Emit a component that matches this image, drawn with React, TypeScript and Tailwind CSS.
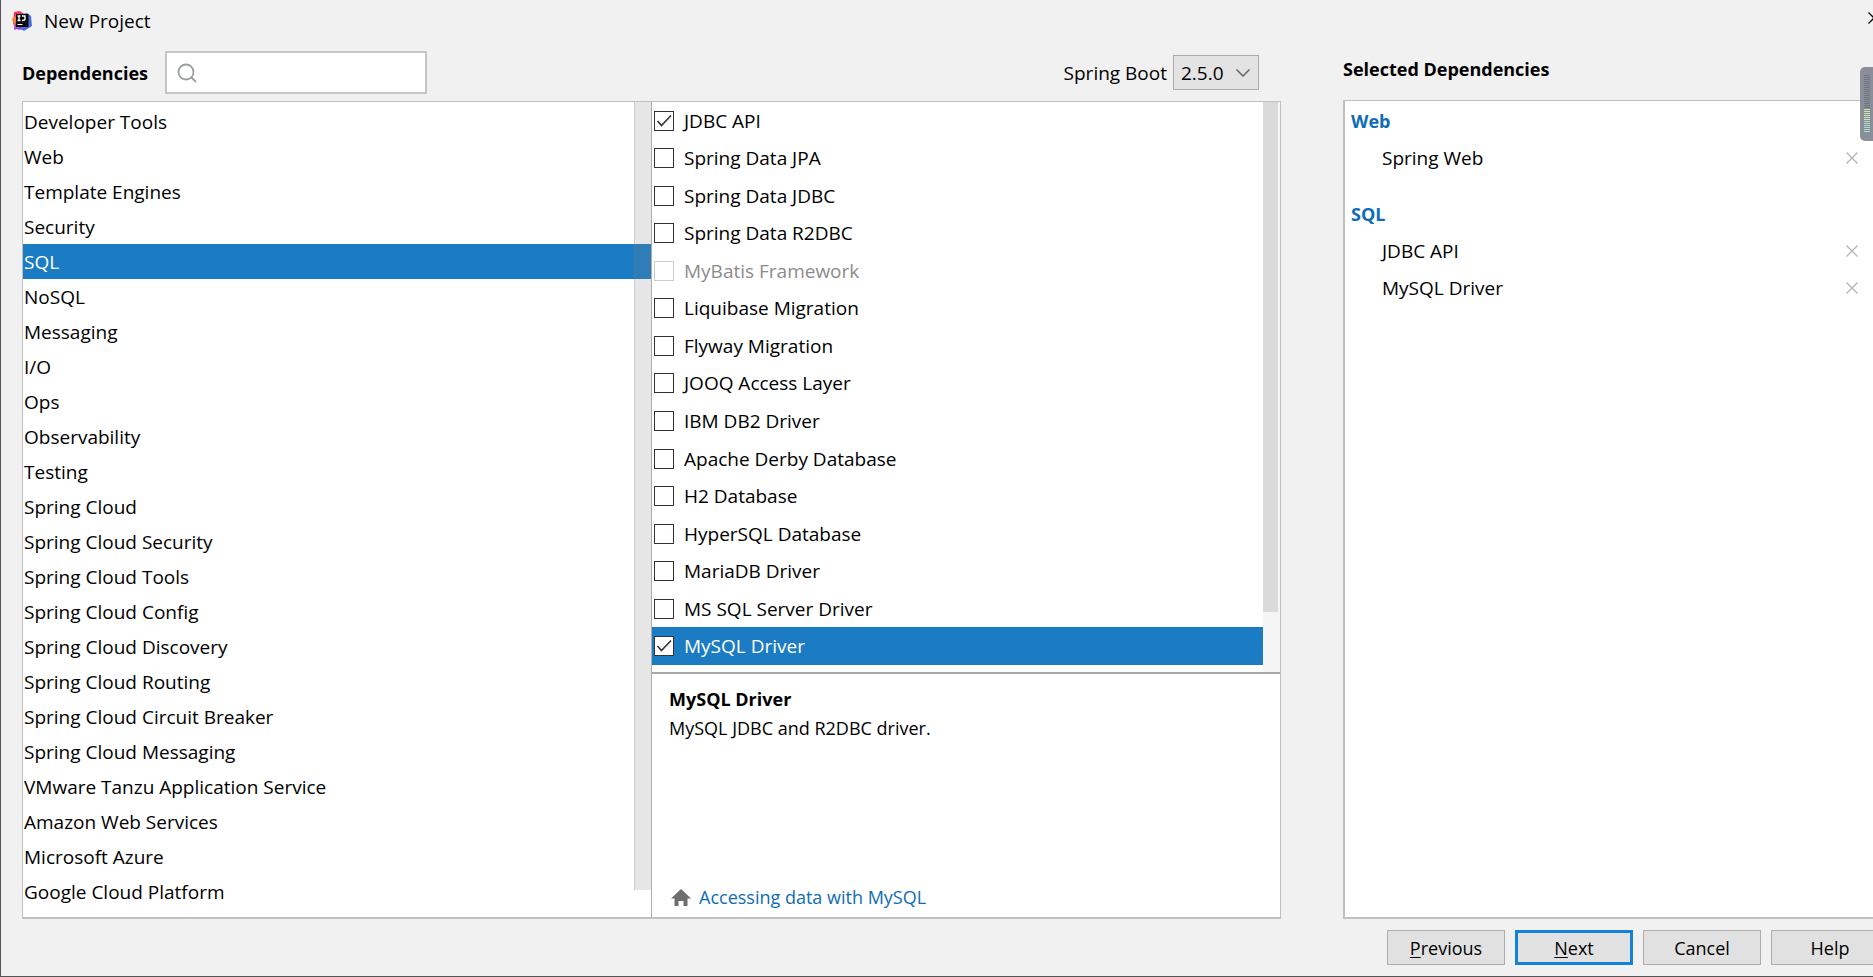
import React, { useState } from 'react';

const categories = [
  'Developer Tools',
  'Web',
  'Template Engines',
  'Security',
  'SQL',
  'NoSQL',
  'Messaging',
  'I/O',
  'Ops',
  'Observability',
  'Testing',
  'Spring Cloud',
  'Spring Cloud Security',
  'Spring Cloud Tools',
  'Spring Cloud Config',
  'Spring Cloud Discovery',
  'Spring Cloud Routing',
  'Spring Cloud Circuit Breaker',
  'Spring Cloud Messaging',
  'VMware Tanzu Application Service',
  'Amazon Web Services',
  'Microsoft Azure',
  'Google Cloud Platform',
];

const dependencies = [
  'JDBC API',
  'Spring Data JPA',
  'Spring Data JDBC',
  'Spring Data R2DBC',
  'MyBatis Framework',
  'Liquibase Migration',
  'Flyway Migration',
  'JOOQ Access Layer',
  'IBM DB2 Driver',
  'Apache Derby Database',
  'H2 Database',
  'HyperSQL Database',
  'MariaDB Driver',
  'MS SQL Server Driver',
  'MySQL Driver',
];

const unavailable = ['MyBatis Framework'];

const IdeaLogo = () => (
  <svg viewBox="0 0 20 20" className="h-5 w-5" aria-hidden="true">
    <path d="M2 1l6-1 4 3-2 13-7 1-2-5z" fill="#f0365c" />
    <path d="M0 8l3-3 4 5-5 5z" fill="#f97a3a" />
    <path d="M10 3l5-1 4 3 1 10-8 5-5-3z" fill="#4a6fe3" />
    <path d="M2 19l1-7 8 6-4 1-2-1z" fill="#9a45e0" />
    <path d="M4 3h12.500v13H4z" fill="#0a0a0a" />
    <path d="M5.500 5h3M7 5v4.500M5.500 9.500h3M10 5h3v3q0 1.500-3 1.500" stroke="#fff" strokeWidth="1.400" fill="none" />
    <path d="M5.500 13.500h5" stroke="#fff" strokeWidth="1" />
  </svg>
);

const Cross = ({ className }: { className: string }) => (
  <svg viewBox="0 0 12 12" className={className} fill="none" stroke="currentColor" strokeWidth="1.300" aria-hidden="true">
    <path d="M.5.5l11 11M11.500.500l-11 11" />
  </svg>
);

interface CheckRowProps {
  name: string;
  checked: boolean;
  disabled: boolean;
  active: boolean;
  onToggle: () => void;
}

const CheckRow: React.FC<CheckRowProps> = ({ name, checked, disabled, active, onToggle }) => (
  <li className={`flex flex-1 items-center pl-[2px] ${active ? 'bg-[#1b7cc4] text-white' : ''}`}>
    <label className={`flex items-center gap-[10px] ${disabled ? 'text-[#8c8c8c]' : ''}`}>
      <span className="grid">
        <input
          type="checkbox"
          checked={checked}
          disabled={disabled}
          onChange={onToggle}
          className="col-start-1 row-start-1 h-5 w-5 appearance-none border border-[#333] bg-white disabled:border-[#ccc]"
        />
        {checked && (
          <svg
            viewBox="0 0 20 20"
            className="pointer-events-none col-start-1 row-start-1 h-5 w-5"
            fill="none"
            stroke="#333"
            strokeWidth="1.6"
            aria-hidden="true"
          >
            <path d="M3.500 10l4 4.500 9.500-10" />
          </svg>
        )}
      </span>
      {name}
    </label>
  </li>
);

const SelectedGroup = ({
  title,
  items,
  onRemove,
}: {
  title: string;
  items: string[];
  onRemove?: (name: string) => void;
}) => (
  <section className="mb-[20px]">
    <h3 className="h-[36px] text-[18px] leading-[36px] font-bold text-[#0f6cb6]">{title}</h3>
    <ul>
      {items.map((item) => (
        <li key={item} className="flex h-[37px] items-center justify-between pr-[15px] pl-[31px]">
          {item}
          <button aria-label={`Remove ${item}`} onClick={() => onRemove?.(item)}>
            <Cross className="h-3 w-3 text-[#b4b4b4]" />
          </button>
        </li>
      ))}
    </ul>
  </section>
);

const footerButton = 'h-[35px] w-[118px] bg-[#e1e1e1]';

export default function App() {
  const [category, setCategory] = useState('SQL');
  const [checked, setChecked] = useState(['JDBC API', 'MySQL Driver']);

  const toggle = (name: string) =>
    setChecked((prev) => (prev.includes(name) ? prev.filter((n) => n !== name) : [...prev, name]));

  return (
    <div className="relative flex min-h-screen flex-col overflow-hidden border-b border-l border-[#555] bg-[#f1f1f1] font-['Open_Sans',sans-serif] text-[19px] leading-[24px] text-black">
      <header className="flex h-[42px] items-center justify-between pl-[11px]">
        <div className="flex items-center gap-3">
          <IdeaLogo />
          <h1>New Project</h1>
        </div>
        <button aria-label="Close" className="-mr-[7px] mb-[6px]">
          <Cross className="h-3 w-3" />
        </button>
      </header>

      <main className="grid flex-1 grid-cols-[1259fr_530fr] gap-[62px] pl-[21px]">
        <div className="flex flex-col">
          <div className="flex h-[59px] items-center justify-between pt-[2px] pr-[22px]">
            <div className="flex items-center gap-[17px]">
              <h2 className="text-[18px] font-bold">Dependencies</h2>
              <label className="flex h-[43px] w-[262px] items-center gap-2 border-2 border-[#c6c6c6] bg-white pl-[10px]">
                <svg viewBox="0 0 20 20" className="h-5 w-5" fill="none" stroke="#9a9da1" strokeWidth="1.800" aria-hidden="true">
                  <circle cx="9" cy="9" r="7.500" />
                  <path d="M14 14l5 5" />
                </svg>
                <input aria-label="Search dependencies" className="min-w-0 flex-1 outline-none" />
              </label>
            </div>
            <label className="flex items-center gap-[6px]">
              Spring Boot
              <span className="grid items-center">
                <select className="col-start-1 row-start-1 h-[35px] w-[86px] appearance-none border border-[#adadad] bg-[#e3e3e3] pl-[7px]">
                  <option>2.5.0</option>
                </select>
                <svg
                  viewBox="0 0 14 8"
                  className="pointer-events-none col-start-1 row-start-1 mr-[9px] h-2 w-[14px] justify-self-end"
                  fill="none"
                  stroke="#666"
                  strokeWidth="1.500"
                  aria-hidden="true"
                >
                  <path d="M.5.5L7 7 13.500.500" />
                </svg>
              </span>
            </label>
          </div>

          <div className="grid flex-1 grid-cols-[628fr_629fr] border border-b-2 border-[#c0c0c0] bg-white">
            <div className="relative">
              <ul className="pt-[2px]">
                {categories.map((name) => (
                  <li key={name}>
                    <button
                      onClick={() => setCategory(name)}
                      className={`block h-[35px] w-full pl-px text-left ${
                        name === category ? 'bg-[#1b7cc4] text-white' : ''
                      }`}
                    >
                      {name}
                    </button>
                  </li>
                ))}
              </ul>
              <div className="absolute top-0 right-0 bottom-[27px] w-[17px] border-l border-[#808080]/25 bg-[#808080]/20" />
            </div>

            <div className="flex flex-col border-l border-[#adadad]">
              <div className="flex">
                <div className="min-w-0 flex-1 pb-[7px]">
                  <ul className="flex h-[563px] flex-col">
                    {dependencies.map((name) => (
                      <CheckRow
                        key={name}
                        name={name}
                        checked={checked.includes(name)}
                        disabled={unavailable.includes(name)}
                        active={name === 'MySQL Driver'}
                        onToggle={() => toggle(name)}
                      />
                    ))}
                  </ul>
                </div>
                <div className="w-[17px] bg-[#f5f5f5] pr-[2px]">
                  <div className="h-[510px] bg-[#dadada]" />
                </div>
              </div>
              <div className="flex flex-1 flex-col border-t-2 border-[#a8a8a8] px-[17px] pt-[12px] pb-[8px] text-[18px]">
                <h3 className="h-[29px] leading-[26px] font-bold">MySQL Driver</h3>
                <p className="leading-[26px]">MySQL JDBC and R2DBC driver.</p>
                <a href="#guide" className="mt-auto flex items-center gap-2 pl-[2px] text-[#0f6cb6]">
                  <svg viewBox="0 0 20 17" className="h-[17px] w-5" fill="#6e6e6e" aria-hidden="true">
                    <path d="M10 0l10 9.500h-3.500V17h-4v-5h-5v5h-4V9.500H0z" />
                  </svg>
                  Accessing data with MySQL
                </a>
              </div>
            </div>
          </div>
        </div>

        <div className="flex min-w-0 flex-col">
          <h2 className="h-[58px] pt-[15px] text-[18px] font-bold">Selected Dependencies</h2>
          <div className="flex-1 border-2 border-t border-r-0 border-[#c0c0c0] bg-white pt-[2px] pl-[6px]">
            <SelectedGroup title="Web" items={['Spring Web']} />
            <SelectedGroup title="SQL" items={checked} onRemove={toggle} />
          </div>
        </div>
      </main>

      <footer className="-mr-[16px] flex justify-end gap-[10px] pt-[11px] pb-[11px] text-[18px]">
        <button className={`${footerButton} border border-[#adadad]`}>
          <u className="underline-offset-2">P</u>revious
        </button>
        <button className={`${footerButton} border-[3px] border-[#1482d8]`}>
          <u className="underline-offset-2">N</u>ext
        </button>
        <button className={`${footerButton} border border-[#adadad]`}>Cancel</button>
        <button className={`${footerButton} border border-[#adadad]`}>Help</button>
      </footer>

      {/* level meter docked on the screen edge */}
      <div className="absolute top-[67px] right-0 flex h-[74px] w-[13px] flex-col items-center rounded-l-[5px] bg-[#8a8e99] pt-2">
        <svg viewBox="0 0 6 58" className="h-[58px] w-[6px]" aria-hidden="true">
          {Array.from({ length: 29 }, (_, i) => (
            <rect key={i} y={i * 2} width="6" height="1" fill={i < 17 ? '#70747f' : i < 23 ? '#c9e8b0' : '#a5e0d0'} />
          ))}
        </svg>
      </div>
    </div>
  );
}
